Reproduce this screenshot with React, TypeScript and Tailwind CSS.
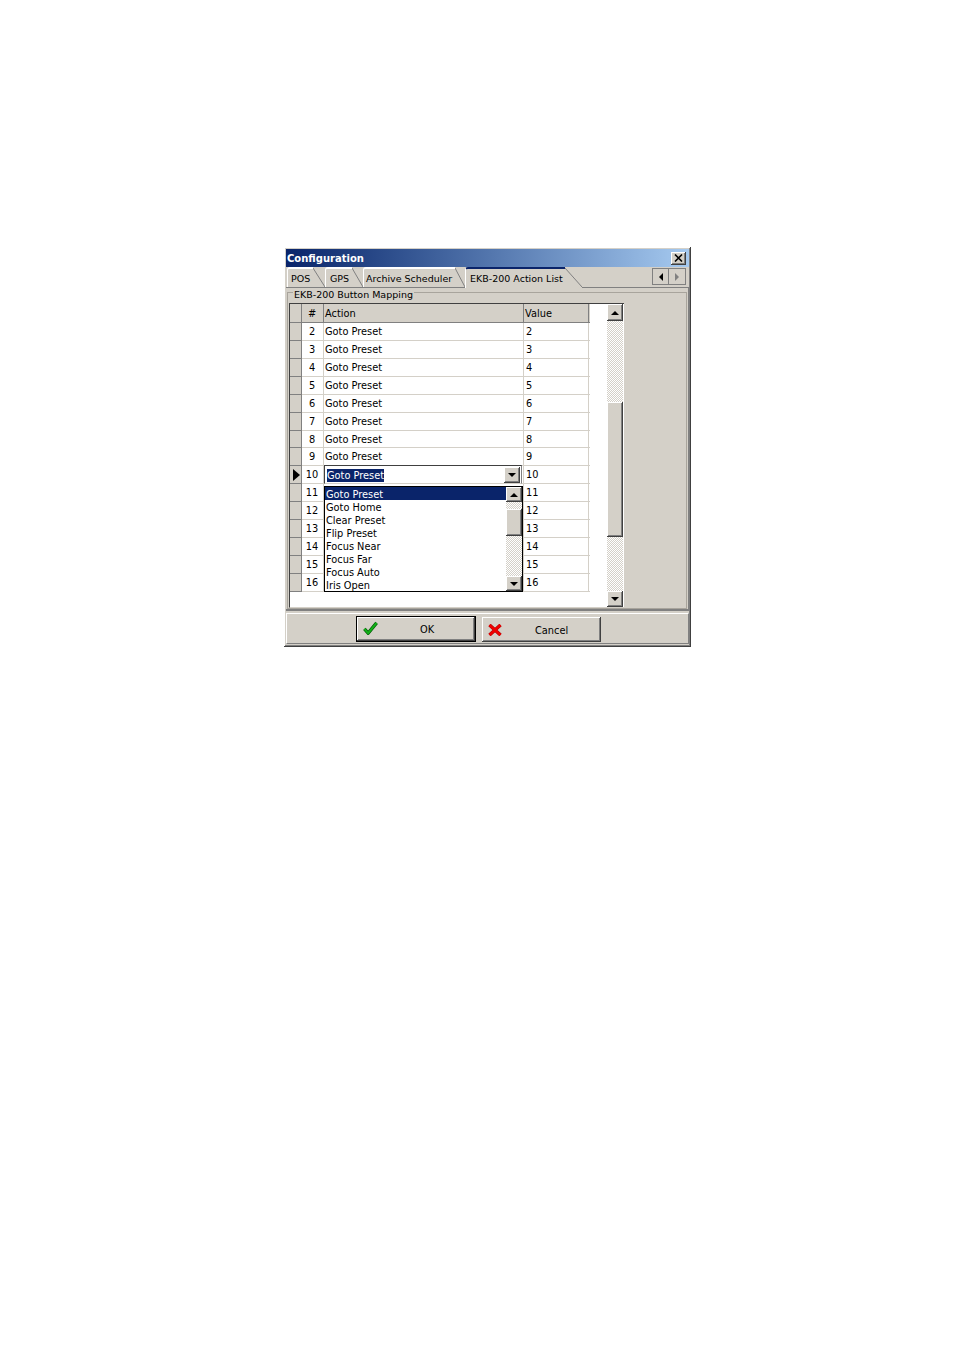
const raised = 'shadow-[inset_-1px_-1px_0_#404040,inset_1px_1px_0_#fff,inset_-2px_-2px_0_#808080]'
const dither = 'bg-[repeating-conic-gradient(#d4d0c8_0_25%,#fff_0_50%)] bg-[length:2px_2px]'

const rows = [2, 3, 4, 5, 6, 7, 8, 9, 10, 11, 12, 13, 14, 15, 16]
const options = ['Goto Preset', 'Goto Home', 'Clear Preset', 'Flip Preset', 'Focus Near', 'Focus Far', 'Focus Auto', 'Iris Open']

function Arrow({ dir, color = '#000' }: { dir: 'up' | 'down' | 'left' | 'right'; color?: string }) {
  const pts = {
    up: '4,1 0,5 8,5',
    down: '0,1 8,1 4,5',
    left: '5,0 5,8 1,4',
    right: '1,0 1,8 5,4',
  }[dir]
  const size = dir === 'up' || dir === 'down' ? 'w-2 h-1.5' : 'w-1.5 h-2'
  const box = dir === 'up' || dir === 'down' ? '0 0 8 6' : '0 0 6 8'
  return (
    <svg viewBox={box} className={size}>
      <polygon points={pts} fill={color} />
    </svg>
  )
}

function ScrollBtn({ dir, h = 'h-[16px]' }: { dir: 'up' | 'down'; h?: string }) {
  return (
    <div className={`${h} w-full shrink-0 bg-[#d4d0c8] flex items-center justify-center ${raised}`}>
      <Arrow dir={dir} />
    </div>
  )
}

function Tab({ label, width, slant, pad, active }: { label: string; width: string; slant: number; pad: string; active?: boolean }) {
  return (
    <div className={`${width} relative flex ${active ? 'h-[21px] z-10' : 'h-[20px]'}`}>
      <div
        className={`flex-1 min-w-0 flex items-center whitespace-nowrap border-l border-white rounded-tl-[3px] ${pad} border-t-2 ${
          active ? 'border-t-[#0a246a] bg-[#d4d0c8] pb-[2px] pt-[2px]' : 'border-t-white pt-[2px] pb-[1px]'
        }`}
      >
        {label}
      </div>
      <svg width={slant} height={active ? 21 : 20} className="shrink-0">
        {active && <polygon points={`0,0 ${slant},20 ${slant},21 0,21`} fill="#d4d0c8" />}
        <line x1="0" y1="1" x2={slant} y2="20" stroke="#808080" />
      </svg>
    </div>
  )
}

function Row({ n, last }: { n: number; last?: boolean }) {
  const current = n === 10
  return (
    <div className={`flex border-b border-[#d4d0c8] ${n === 8 ? 'h-[17px]' : 'h-[18px]'}`}>
      <div className="w-[12px] shrink-0 bg-[#d4d0c8] border-r border-b border-[#808080] -mb-px pl-[1px] flex items-center justify-center">
        {current && (
          <svg viewBox="0 0 7 12" className="w-[7px] h-[12px]">
            <polygon points="0,0 7,6 0,12" fill="#000" />
          </svg>
        )}
      </div>
      <div className="w-[22px] shrink-0 border-r border-[#d4d0c8] text-center pr-[1px] pt-[2px]">{n}</div>
      <div className="w-[200px] shrink-0 border-r border-[#d4d0c8] pl-[1px] pt-[2px]">{!current && !last && 'Goto Preset'}</div>
      <div className="w-[65px] shrink-0 border-r border-[#d4d0c8] pl-[2px] pt-[2px]">{n}</div>
    </div>
  )
}

export default function App() {
  return (
    <div className="w-[954px] h-[1351px] bg-white pl-[284px] pt-[247px] text-[9.5px] leading-[13px] text-black font-['DejaVu_Sans',sans-serif]">
      <div className={`w-[407px] h-[400px] bg-[#d4d0c8] p-[2px] flex flex-col ${raised}`}>
        {/* title bar */}
        <div className="h-[18px] shrink-0 flex items-center justify-between bg-gradient-to-r from-[#0a246a] to-[#a6caf0] pl-[1px] pr-[3px]">
          <span className="text-white font-bold text-[10px]">Configuration</span>
          <div className={`w-[15px] h-[13px] bg-[#d4d0c8] flex items-center justify-center ${raised}`}>
            <svg viewBox="0 0 9 8" className="w-[9px] h-[8px]">
              <path d="M1 0.5 L8 7.5 M8 0.5 L1 7.5" stroke="#000" strokeWidth="1.6" />
            </svg>
          </div>
        </div>

        {/* tabs */}
        <div className="h-[20px] shrink-0 flex pl-[1px]">
          <Tab label="POS" width="w-[38px]" slant={12} pad="pl-[3px]" />
          <Tab label="GPS" width="w-[38px]" slant={11} pad="pl-[4px]" />
          <Tab label="Archive Scheduler" width="w-[102px]" slant={10} pad="pl-[2px]" />
          <Tab label="EKB-200 Action List" width="w-[117px]" slant={17} pad="pl-[4px]" active />
          <div className="ml-[70px] mr-[3px] mt-[1px] flex h-[17px]">
            <div className="w-[17px] border border-[#808080] flex items-center justify-center">
              <Arrow dir="left" />
            </div>
            <div className="w-[17px] border border-l-0 border-[#808080] flex items-center justify-center">
              <Arrow dir="right" color="#808080" />
            </div>
          </div>
        </div>

        {/* tab sheet */}
        <div className="h-[324px] shrink-0 border-t border-[#808080] border-r border-r-[#808080] border-b-2 border-b-[#808080] pt-[4px] pl-[1px] pr-[1px]">
          <div className="relative h-[317px] border border-[#a8a49c] pt-[10px] pl-[1px]">
            <span className="absolute -top-[5px] left-[5px] bg-[#d4d0c8] px-[1px]">EKB-200 Button Mapping</span>

            {/* grid */}
            <div className="relative w-[335px] h-[305px] text-[9.8px] bg-white border-l border-t border-[#404040] border-b border-b-[#d4d0c8] flex justify-between">
              <div className="w-[300px]">
                <div className="flex h-[19px] bg-[#d4d0c8] border-b border-[#808080]">
                  <div className="w-[12px] shrink-0 border-r border-[#808080]" />
                  <div className="w-[22px] shrink-0 border-r border-[#808080] text-center pr-[1px] pt-[3px]">#</div>
                  <div className="w-[200px] shrink-0 border-r border-[#808080] pl-[1px] pt-[3px]">Action</div>
                  <div className="w-[65px] shrink-0 border-r border-[#808080] pl-[1px] pt-[3px]">Value</div>
                </div>
                {rows.map((n) => (
                  <Row key={n} n={n} last={n > 10} />
                ))}
              </div>

              {/* main scrollbar */}
              <div className="w-[16px] mr-[1px] flex flex-col">
                <ScrollBtn dir="up" h="h-[17px]" />
                <div className={`h-[81px] ${dither}`} />
                <div className={`h-[135px] bg-[#d4d0c8] ${raised}`} />
                <div className={`flex-1 ${dither}`} />
                <ScrollBtn dir="down" />
              </div>

              {/* combo editor, row 10 */}
              <div className="absolute left-[34px] top-[161px] w-[198px] h-[19px] bg-white border border-[#404040] border-r-[#808080] border-b-[#d4d0c8] flex items-center justify-between pl-[2px] pr-[1px]">
                <span className="bg-[#0a246a] text-white h-[13px] mt-[1px]">Goto Preset</span>
                <div className="w-[16px] h-[16px]">
                  <ScrollBtn dir="down" />
                </div>
              </div>

              {/* open dropdown */}
              <div className="absolute left-[34px] top-[182px] w-[199px] h-[106px] bg-white border border-black flex">
                <div className="flex-1 min-w-0">
                  {options.map((o, i) => (
                    <div key={o} className={`h-[13px] leading-[15px] pl-[1px] ${i === 0 ? 'bg-[#0a246a] text-white' : ''}`}>
                      {o}
                    </div>
                  ))}
                </div>
                <div className="w-[16px] flex flex-col">
                  <ScrollBtn dir="up" h="h-[15px]" />
                  <div className={`h-[7px] ${dither}`} />
                  <div className={`h-[27px] bg-[#d4d0c8] ${raised}`} />
                  <div className={`flex-1 ${dither}`} />
                  <ScrollBtn dir="down" h="h-[15px]" />
                </div>
              </div>
            </div>
          </div>
        </div>

        {/* footer */}
        <div className="flex-1 mt-[2px] mb-[1px] border border-t-white border-l-white border-b-[#808080] border-r-[#808080] flex items-start pl-[69px] pt-[2px] gap-[6px] text-[9.8px]">
          <div className="w-[120px] h-[26px] border border-black">
            <div className={`h-full bg-[#d4d0c8] flex items-center pl-[6px] ${raised}`}>
              <svg viewBox="0 0 16 14" className="w-[15px] h-[14px] -mt-[2px]">
                <path d="M1.5 8 L5.5 12.5 L14.5 1.5" fill="none" stroke="#045c08" strokeWidth="3.6" />
                <path d="M1.5 8 L5.5 12.5 L14.5 1.5" fill="none" stroke="#12b018" strokeWidth="2.2" />
              </svg>
              <span className="ml-[42px]">OK</span>
            </div>
          </div>
          <div className={`w-[119px] h-[25px] mt-[1px] bg-[#d4d0c8] flex items-center pl-[6px] ${raised}`}>
            <svg viewBox="0 0 14 12" className="w-[14px] h-[12px]">
              <path d="M1.5 1 L12.5 11 M12.5 1 L1.5 11" fill="none" stroke="#a00000" strokeWidth="3.4" />
              <path d="M1.5 1 L12.5 11 M12.5 1 L1.5 11" fill="none" stroke="#f00000" strokeWidth="2.4" />
            </svg>
            <span className="ml-[33px] pt-[1px]">Cancel</span>
          </div>
        </div>
      </div>
    </div>
  )
}
